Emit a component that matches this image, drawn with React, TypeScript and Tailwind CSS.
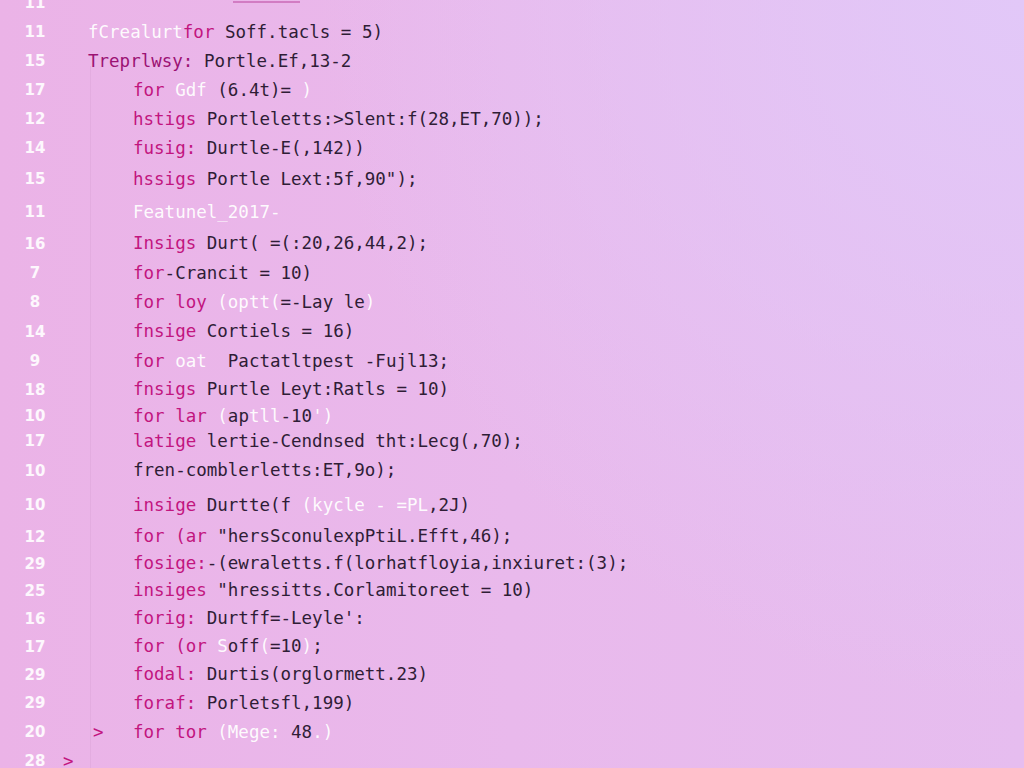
import React from 'react'

type Tone = 'k' | 'p' | 'd' | 'w'
type Seg = [Tone, string]

type Line = {
  num: string
  height: string
  indent: 'base' | 'in' | 'in2'
  gutterMark?: boolean
  codeMark?: boolean
  segs: Seg[]
}

const toneClass: Record<Tone, string> = {
  k: 'text-[#c2157f]',
  p: 'text-[#9c1273]',
  d: 'text-[#2f1d36]',
  w: 'text-white/95',
}

const lines: Line[] = [
  { num: '11', height: 'h-[29px]', indent: 'base', segs: [] },
  {
    num: '11',
    height: 'h-[29px]',
    indent: 'base',
    segs: [
      ['w', 'fCrealurt'],
      ['k', 'for'],
      ['d', ' Soff.tacls = 5)'],
    ],
  },
  {
    num: '15',
    height: 'h-[29px]',
    indent: 'base',
    segs: [
      ['p', 'Treprlwsy:'],
      ['d', ' Portle.Ef,13-2'],
    ],
  },
  {
    num: '17',
    height: 'h-[29px]',
    indent: 'in',
    segs: [
      ['k', 'for '],
      ['w', 'Gdf '],
      ['d', '(6.4t)= '],
      ['w', ')'],
    ],
  },
  {
    num: '12',
    height: 'h-[29px]',
    indent: 'in',
    segs: [
      ['k', 'hstigs'],
      ['d', ' Portleletts:>Slent:f(28,ET,70));'],
    ],
  },
  {
    num: '14',
    height: 'h-[29px]',
    indent: 'in',
    segs: [
      ['k', 'fusig:'],
      ['d', ' Durtle-E(,142))'],
    ],
  },
  {
    num: '15',
    height: 'h-[33px]',
    indent: 'in',
    segs: [
      ['k', 'hssigs'],
      ['d', ' Portle Lext:5f,90");'],
    ],
  },
  {
    num: '11',
    height: 'h-[33px]',
    indent: 'in',
    segs: [['w', 'Featunel_2017-']],
  },
  {
    num: '16',
    height: 'h-[30px]',
    indent: 'in',
    segs: [
      ['k', 'Insigs'],
      ['d', ' Durt( =(:20,26,44,2);'],
    ],
  },
  {
    num: '7',
    height: 'h-[29px]',
    indent: 'in',
    segs: [
      ['k', 'for'],
      ['d', '-Crancit = 10)'],
    ],
  },
  {
    num: '8',
    height: 'h-[29px]',
    indent: 'in',
    segs: [
      ['k', 'for loy '],
      ['w', '(optt('],
      ['d', '=-Lay le'],
      ['w', ')'],
    ],
  },
  {
    num: '14',
    height: 'h-[30px]',
    indent: 'in',
    segs: [
      ['k', 'fnsige'],
      ['d', ' Cortiels = 16)'],
    ],
  },
  {
    num: '9',
    height: 'h-[29px]',
    indent: 'in',
    segs: [
      ['k', 'for '],
      ['w', 'oat'],
      ['d', '  Pactatltpest -Fujl13;'],
    ],
  },
  {
    num: '18',
    height: 'h-[28px]',
    indent: 'in',
    segs: [
      ['k', 'fnsigs'],
      ['d', ' Purtle Leyt:Ratls = 10)'],
    ],
  },
  {
    num: '10',
    height: 'h-[25px]',
    indent: 'in',
    segs: [
      ['k', 'for lar '],
      ['w', '('],
      ['d', 'ap'],
      ['w', 'tll'],
      ['d', '-10'],
      ['w', "')"],
    ],
  },
  {
    num: '17',
    height: 'h-[25px]',
    indent: 'in',
    segs: [
      ['k', 'latige'],
      ['d', ' lertie-Cendnsed tht:Lecg(,70);'],
    ],
  },
  {
    num: '10',
    height: 'h-[34px]',
    indent: 'in',
    segs: [['d', 'fren-comblerletts:ET,9o);']],
  },
  {
    num: '10',
    height: 'h-[35px]',
    indent: 'in',
    segs: [
      ['k', 'insige'],
      ['d', ' Durtte(f '],
      ['w', '(kycle - =PL'],
      ['d', ',2J)'],
    ],
  },
  {
    num: '12',
    height: 'h-[28px]',
    indent: 'in',
    segs: [
      ['k', 'for (ar'],
      ['d', ' "hersSconulexpPtiL.Efft,46);'],
    ],
  },
  {
    num: '29',
    height: 'h-[26px]',
    indent: 'in',
    segs: [
      ['k', 'fosige:'],
      ['d', '-(ewraletts.f(lorhatfloyia,inxiuret:(3);'],
    ],
  },
  {
    num: '25',
    height: 'h-[28px]',
    indent: 'in',
    segs: [
      ['k', 'insiges'],
      ['d', ' "hressitts.Corlamitoreet = 10)'],
    ],
  },
  {
    num: '16',
    height: 'h-[28px]',
    indent: 'in',
    segs: [
      ['k', 'forig:'],
      ['d', " Durtff=-Leyle':"],
    ],
  },
  {
    num: '17',
    height: 'h-[28px]',
    indent: 'in',
    segs: [
      ['k', 'for (or '],
      ['w', 'S'],
      ['d', 'off'],
      ['w', '('],
      ['d', '=10'],
      ['w', ')'],
      ['d', ';'],
    ],
  },
  {
    num: '29',
    height: 'h-[28px]',
    indent: 'in',
    segs: [
      ['k', 'fodal:'],
      ['d', ' Durtis(orglormett.23)'],
    ],
  },
  {
    num: '29',
    height: 'h-[29px]',
    indent: 'in',
    segs: [
      ['k', 'foraf:'],
      ['d', ' Porletsfl,199)'],
    ],
  },
  {
    num: '20',
    height: 'h-[29px]',
    indent: 'in2',
    codeMark: true,
    segs: [
      ['k', 'for tor '],
      ['w', '(Mege:'],
      ['d', ' 48'],
      ['w', '.)'],
    ],
  },
  { num: '28', height: 'h-[29px]', indent: 'base', gutterMark: true, segs: [] },
]

export default function App() {
  return (
    <div className="relative h-[768px] w-[1024px] overflow-hidden bg-[radial-gradient(circle_at_100%_0%,#e2c8f8_0%,transparent_55%),linear-gradient(90deg,#ebb3e7_0%,#e9b9ec_50%,#e6bdef_100%)]">
      {/* indent guide */}
      <div className="absolute left-[90px] top-[66px] h-[702px] w-px bg-[#dca4d8]/50" />

      <div className="-mt-[11px] flex flex-col font-['DejaVu_Sans_Mono',monospace] text-[17.5px] leading-none">
        {lines.map((line, i) => (
          <div key={i} className={`flex items-center ${line.height}`}>
            <div className="flex w-[88px] items-center">
              <span className="w-[50px] pl-[20px] text-center font-['DejaVu_Sans',sans-serif] text-[15px] font-bold text-white/90">
                {line.num}
              </span>
              {line.gutterMark && (
                <span className="ml-[13px] text-[#c2157f]">&gt;</span>
              )}
            </div>
            <div
              className={`flex items-center whitespace-pre ${
                line.indent === 'in' ? 'pl-[45px]' : ''
              }`}
            >
              {line.codeMark && (
                <span className="w-[45px] pl-[5px] text-[#c2157f]">&gt;</span>
              )}
              {i === 0 && (
                <span className="mb-[4px] ml-[145px] inline-block h-[2px] w-[67px] bg-[#d27cc3]" />
              )}
              {line.segs.map(([tone, text], j) => (
                <span key={j} className={toneClass[tone]}>
                  {text}
                </span>
              ))}
            </div>
          </div>
        ))}
      </div>
    </div>
  )
}
